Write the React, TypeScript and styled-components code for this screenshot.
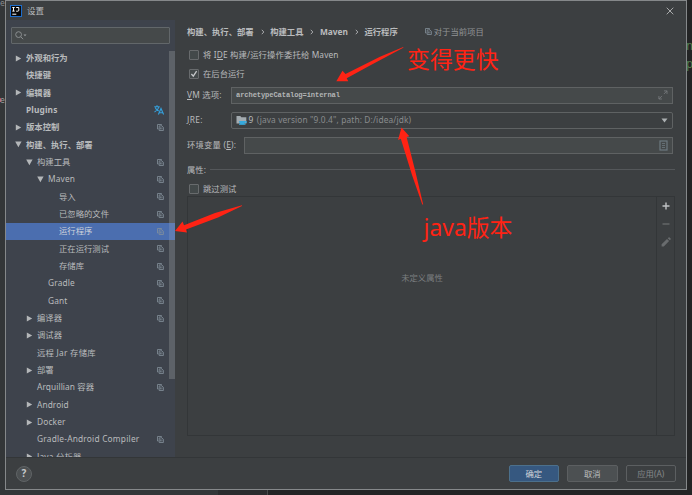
import React from 'react';
import styled, { createGlobalStyle, css } from 'styled-components';

const GlobalStyle = createGlobalStyle`
  * { box-sizing: border-box; }
  html, body { margin: 0; padding: 0; background: #2b2d2f; }
  body { overflow: hidden; }
`;

const Desktop = styled.div`
  position: relative;
  width: 692px;
  height: 495px;
  overflow: hidden;
  padding-left: 5px;
  background:
    linear-gradient(#333638, #333638) 0 0 / 5px 495px no-repeat,
    linear-gradient(90deg, #333638 0 218px, #2b2c2e 218px 267px, #484a4b 267px 268px, #232425 268px);
  font-family: 'Noto Sans', 'Noto Sans CJK SC', sans-serif;
  font-size: 8.33px;
  line-height: 12px;
  color: #b9bbbd;
  white-space: nowrap;
`;

const EditorGlyph = styled.span<{ $x: number; $y: number; $color: string; $size?: number }>`
  position: absolute;
  left: ${p => p.$x}px;
  top: ${p => p.$y}px;
  color: ${p => p.$color};
  font: ${p => p.$size ?? 9}px/12px 'DejaVu Sans Mono', monospace;
`;

const ErrorMark = styled.span`
  position: absolute;
  left: 0;
  top: 98px;
  width: 1px;
  height: 4px;
  background: #b8433d;
`;

const Dialog = styled.div`
  position: relative;
  display: flex;
  flex-direction: column;
  width: 682px;
  height: 490px;
  border: 1px solid #85888a;
  background: #3c3f41;
`;

const TitleBar = styled.header`
  display: flex;
  align-items: center;
  flex: 0 0 19px;
  padding: 0 12px 0 4px;
  gap: 5px;
  font-size: 8.5px;
  svg:last-child { margin-left: auto; }
`;

const Body = styled.div`
  display: flex;
  flex: 0 0 438px;
  min-height: 0;
  height: 438px;
  border-bottom: 1px solid #333638;
`;

const Sidebar = styled.aside`
  display: flex;
  flex-direction: column;
  width: 169px;
  height: 437px;
  overflow: hidden;
  background: #3e434c;
`;

const Search = styled.div`
  display: flex;
  align-items: center;
  flex: none;
  width: 159px;
  height: 17px;
  margin: 7px 5px 5.5px;
  padding-left: 3px;
  border: 1px solid #62676a;
  border-radius: 1px;
  background: #45494a;
`;

const TreeViewport = styled.div`
  flex: 1;
  min-height: 0;
  overflow: hidden;
  background: linear-gradient(#5d6268, #5d6268) 163px 1px / 6px 328px no-repeat;
`;

const Tree = styled.div`
  width: 169px;
`;

const TreeRow = styled.div<{ $depth: number; $bold?: boolean; $selected?: boolean }>`
  display: flex;
  align-items: center;
  height: 17.33px;
  padding: 0 11.5px 0 ${p => 9 + p.$depth * 11}px;
  font-weight: ${p => (p.$bold ? 700 : 400)};
  ${p => p.$selected && css`
    background: linear-gradient(90deg, #4b6eaf 163px, #5f7db4 163px);
    color: #d0d4dc;
  `}
`;

const ArrowSlot = styled.span`
  display: flex;
  flex: 0 0 11px;
`;

const RowLabel = styled.span<{ $spacing?: number }>`
  flex: 1;
  letter-spacing: ${p => p.$spacing ?? 0}px;
`;

const Main = styled.main`
  flex: 1;
  display: flex;
  flex-direction: column;
  padding: 4.5px 11px 0 12px;
`;

const Breadcrumb = styled.nav`
  display: flex;
  align-items: center;
  height: 14px;
  font-weight: 700;
`;

const Separator = styled.svg`
  margin: 0 5.5px 0 7px;
`;

const Scope = styled.span`
  display: flex;
  align-items: center;
  gap: 2px;
  margin-left: 27px;
  font-weight: 400;
  color: #929597;
`;

const CheckRow = styled.label<{ $top: number; $spacing?: number }>`
  display: flex;
  align-items: center;
  height: 12px;
  margin-top: ${p => p.$top}px;
  padding-left: 2px;
  gap: 4px;
  letter-spacing: ${p => p.$spacing ?? 0}px;
`;

const CheckBox = styled.span`
  display: flex;
  align-items: center;
  justify-content: center;
  width: 10px;
  height: 10px;
  border: 1px solid #686b6d;
  border-radius: 1px;
  background: #43494a;
`;

const FieldRow = styled.div<{ $top: number; $label: number; $spacing?: number }>`
  display: grid;
  grid-template-columns: ${p => p.$label}px 1fr;
  align-items: center;
  height: 17px;
  margin-top: ${p => p.$top}px;
  padding-right: 2px;
  letter-spacing: ${p => p.$spacing ?? 0}px;
`;

const FieldBox = styled.div<{ $combo?: boolean }>`
  display: flex;
  align-items: center;
  height: 17px;
  padding: 0 4px;
  border: 1px solid #5f6263;
  border-radius: ${p => (p.$combo ? 2 : 0)}px;
  background: ${p => (p.$combo ? '#3c3f41' : '#45494a')};
  svg:last-child { margin-left: auto; }
`;

const Mono = styled.span`
  font: 700 7.1px/12px 'Liberation Mono', monospace;
  letter-spacing: -0.1px;
  color: #b3b5b6;
`;

const Version = styled.span`
  margin: 0 3px 0 1.5px;
`;

const Muted = styled.span`
  color: #898c8e;
  letter-spacing: 0.13px;
`;

const SectionTitle = styled.div`
  display: flex;
  align-items: center;
  gap: 4px;
  height: 12px;
  margin-top: 10px;
  &::after { content: ''; flex: 1; height: 1px; background: #54575a; }
`;

const Table = styled.section`
  display: flex;
  height: 240px;
  margin-top: 1px;
  border: 1px solid #333638;
`;

const EmptyState = styled.div`
  flex: 1;
  padding-top: 75px;
  text-align: center;
  color: #7b7e80;
`;

const TableTools = styled.div`
  display: flex;
  flex-direction: column;
  align-items: center;
  gap: 8px;
  width: 18px;
  padding-top: 4px;
  border-left: 1px solid #333638;
`;

const Footer = styled.footer`
  display: flex;
  align-items: center;
  flex: 1;
  padding: 0 10px;
  gap: 8px;
`;

const Help = styled.button`
  width: 16px;
  height: 16px;
  margin-right: auto;
  padding: 0;
  border: 1px solid #606466;
  border-radius: 50%;
  background: #4c5052;
  color: #c5c8ca;
  font: 700 10px/13px 'Noto Sans', sans-serif;
`;

const Button = styled.button<{ $kind?: 'primary' | 'disabled' }>`
  width: 50.5px;
  height: 17px;
  padding: 0;
  border: 1px solid ${p => (p.$kind === 'primary' ? '#4c708c' : '#5c5f61')};
  border-radius: 2px;
  background: ${p => (p.$kind === 'primary' ? '#365880' : p.$kind === 'disabled' ? '#3c3f41' : '#4c5052')};
  color: ${p => (p.$kind === 'primary' ? '#d0d5da' : p.$kind === 'disabled' ? '#85888a' : '#bbbdbf')};
  font: inherit;
  line-height: 14px;
`;

const Annotations = styled.svg`
  position: absolute;
  inset: 0;
  pointer-events: none;
`;

const Note = styled.div<{ $x: number; $y: number }>`
  position: absolute;
  left: ${p => p.$x}px;
  top: ${p => p.$y}px;
  color: #ff2314;
  font-size: 22.9px;
  line-height: 30px;
`;

const CopyIcon = () => (
  <svg width="7" height="7" viewBox="0 0 7 7" fill="none" stroke="#84909a" strokeWidth=".8">
    <path d="M1.6 5H.5V.5h4v1M2.2 1.9h2.6l1.6 1.4v3.2H2.2zM3.4 3.4v2M4.9 3.4v2" />
  </svg>
);

const TranslateIcon = () => (
  <svg width="10" height="10" viewBox="0 0 10 10" fill="none" stroke="#35a0dc" strokeWidth="1.1">
    <path d="M.3 1.7h5.4M3 .3v1.4M1.2 2.5c.7 2 2 3 3.6 3.6M4.9 2.2C4.2 4.5 2.6 6 .5 7M4.4 9.5 7 3.5l2.6 6M5.3 7.7h3.4" />
  </svg>
);

const TreeArrow = ({ open }: { open?: boolean }) => (
  <svg width="7" height="7" viewBox="0 0 7 7" fill="#b4b7b9">
    <path d={open ? 'M.2.6h6.400L3.400 6.200z' : 'M.8.4v6.200l5.400-3.100z'} />
  </svg>
);

const Chevron = () => (
  <Separator width="4" height="6" viewBox="0 0 4 6" fill="none" stroke="#b4b7b9" strokeWidth=".9">
    <path d="m.8.8 2 2.2-2 2.2" />
  </Separator>
);

type Item = {
  label: string;
  depth: number;
  arrow?: 'open' | 'closed';
  icon?: 'copy' | 'translate';
  bold?: boolean;
  selected?: boolean;
  spacing?: number;
};

const items: Item[] = [
  { label: '外观和行为', depth: 0, arrow: 'closed', bold: true },
  { label: '快捷键', depth: 0, bold: true },
  { label: '编辑器', depth: 0, arrow: 'closed', bold: true },
  { label: 'Plugins', depth: 0, icon: 'translate', bold: true, spacing: 0.15 },
  { label: '版本控制', depth: 0, arrow: 'closed', icon: 'copy', bold: true },
  { label: '构建、执行、部署', depth: 0, arrow: 'open', bold: true },
  { label: '构建工具', depth: 1, arrow: 'open', icon: 'copy' },
  { label: 'Maven', depth: 2, arrow: 'open', icon: 'copy', spacing: 0.15 },
  { label: '导入', depth: 3, icon: 'copy' },
  { label: '已忽略的文件', depth: 3, icon: 'copy' },
  { label: '运行程序', depth: 3, icon: 'copy', selected: true },
  { label: '正在运行测试', depth: 3, icon: 'copy' },
  { label: '存储库', depth: 3, icon: 'copy' },
  { label: 'Gradle', depth: 2, icon: 'copy', spacing: 0.15 },
  { label: 'Gant', depth: 2, icon: 'copy', spacing: 0.1 },
  { label: '编译器', depth: 1, arrow: 'closed', icon: 'copy' },
  { label: '调试器', depth: 1, arrow: 'closed' },
  { label: '远程 Jar 存储库', depth: 1, icon: 'copy', spacing: 0.25 },
  { label: '部署', depth: 1, arrow: 'closed', icon: 'copy' },
  { label: 'Arquillian 容器', depth: 1, icon: 'copy', spacing: 0.08 },
  { label: 'Android', depth: 1, arrow: 'closed', spacing: 0.08 },
  { label: 'Docker', depth: 1, arrow: 'closed', spacing: 0.15 },
  { label: 'Gradle-Android Compiler', depth: 1, icon: 'copy', spacing: 0.21 },
  { label: 'Java 分析器', depth: 1, arrow: 'closed', spacing: 0.2 },
];

export default function App() {
  return (
    <>
      <GlobalStyle />
      <Desktop>
        <EditorGlyph $x={0} $y={-2} $color="#8b8d8f" $size={8}>e</EditorGlyph>
        <ErrorMark />
        <EditorGlyph $x={0} $y={95} $color="#a0a2a4" $size={8}>e</EditorGlyph>
        <EditorGlyph $x={686} $y={40} $color="#557f50" $size={12}>n</EditorGlyph>
        <EditorGlyph $x={686} $y={58} $color="#557f50" $size={12}>p</EditorGlyph>
        <Dialog>
          <TitleBar>
            <svg width="12" height="12" viewBox="0 0 12 12">
              <rect x=".5" y=".5" width="11" height="11" fill="#080808" stroke="#1d6dcc" />
              <path d="M2.3 2.5h2.4M3.5 2.5v3.6M2.3 6.1h2.4M6.2 2.5h2.6v2.7q0 1-1 1H6.2M2.3 9.2h4" stroke="#fff" fill="none" />
            </svg>
            <span>设置</span>
            <svg width="8" height="8" viewBox="0 0 8 8" stroke="#b4b7b8" strokeWidth=".9">
              <path d="m.7.7 6.6 6.6M7.3.7.7 7.3" />
            </svg>
          </TitleBar>
          <Body>
            <Sidebar>
              <Search>
                <svg width="12" height="9" viewBox="0 0 12 9" fill="none" stroke="#8b8f91">
                  <circle cx="3.6" cy="3.6" r="2.9" />
                  <path d="m5.7 5.7 2.4 2.5" />
                  <path d="M8.5 3.5h3L10 5.2z" fill="#9a9ea0" stroke="none" />
                </svg>
              </Search>
              <TreeViewport>
                <Tree>
                  {items.map(it => (
                    <TreeRow key={it.label} $depth={it.depth} $bold={it.bold} $selected={it.selected}>
                      <ArrowSlot>{it.arrow && <TreeArrow open={it.arrow === 'open'} />}</ArrowSlot>
                      <RowLabel $spacing={it.spacing}>{it.label}</RowLabel>
                      {it.icon === 'copy' && <CopyIcon />}
                      {it.icon === 'translate' && <TranslateIcon />}
                    </TreeRow>
                  ))}
                </Tree>
              </TreeViewport>
            </Sidebar>
            <Main>
              <Breadcrumb>
                <span>构建、执行、部署</span><Chevron />
                <span>构建工具</span><Chevron />
                <span>Maven</span><Chevron />
                <span>运行程序</span>
                <Scope><CopyIcon />对于当前项目</Scope>
              </Breadcrumb>
              <CheckRow $top={10.5} $spacing={0.13}>
                <CheckBox />
                <span>将 I<u>D</u>E 构建/运行操作委托给 Maven</span>
              </CheckRow>
              <CheckRow $top={7}>
                <CheckBox>
                  <svg width="8" height="8" viewBox="0 0 8 8" fill="none" stroke="#c5c8ca" strokeWidth="1.3">
                    <path d="m1.4 4 1.9 2.2 3.3-5" />
                  </svg>
                </CheckBox>
                <span>在后台运行</span>
              </CheckRow>
              <FieldRow $top={6.5} $label={44} $spacing={0.15}>
                <span><u>V</u>M 选项:</span>
                <FieldBox>
                  <Mono>archetypeCatalog=internal</Mono>
                  <svg width="10" height="10" viewBox="0 0 10 10" fill="none" stroke="#74787a" strokeWidth=".9">
                    <path d="M6 .9h3v3M9 .9 5.9 4M.9 6v3h3M.9 9 4 5.9" />
                  </svg>
                </FieldBox>
              </FieldRow>
              <FieldRow $top={8} $label={44} $spacing={0.4}>
                <span><u>J</u>RE:</span>
                <FieldBox $combo>
                  <svg width="11" height="10" viewBox="0 0 11 10">
                    <path d="M.5 1h3.8l1 1.3h5v6.200H.5z" fill="#a3abb0" />
                    <path d="M3.200 6h6v1q0 1.500-1.400 2.200H4.600Q3.200 8.500 3.200 7z" fill="#35a9dd" />
                    <path d="M9 6.500h1.500v1.300H9M3 9.500h6.500" stroke="#35a9dd" strokeWidth=".8" fill="none" />
                  </svg>
                  <Version>9</Version>
                  <Muted>(java version "9.0.4", path: D:/idea/jdk)</Muted>
                  <svg width="7" height="5" viewBox="0 0 7 5" fill="#acb0b2"><path d="M.5.5h6l-3 4z" /></svg>
                </FieldBox>
              </FieldRow>
              <FieldRow $top={8} $label={57} $spacing={0.2}>
                <span>环境变量 (<u>E</u>):</span>
                <FieldBox>
                  <svg width="9" height="11" viewBox="0 0 9 11" fill="none" stroke="#6d7980">
                    <rect x="1" y="1" width="7" height="9" strokeWidth="1.2" />
                    <path d="M3 3.500h3M3 5.500h3M3 7.500h3" strokeWidth=".8" />
                  </svg>
                </FieldBox>
              </FieldRow>
              <SectionTitle>属性:</SectionTitle>
              <CheckRow $top={7.5}>
                <CheckBox />
                <span>跳过测试</span>
              </CheckRow>
              <Table>
                <EmptyState>未定义属性</EmptyState>
                <TableTools>
                  <svg width="10" height="10" viewBox="0 0 10 10" stroke="#bfc2c4" strokeWidth="1.4"><path d="M5 1.500v7M1.500 5h7" /></svg>
                  <svg width="10" height="10" viewBox="0 0 10 10" stroke="#66696b" strokeWidth="1.4"><path d="M1.500 5h7" /></svg>
                  <svg width="10" height="10" viewBox="0 0 10 10" fill="#696c6e"><path d="M.6 9.400V7.200L6 1.900 8.100 4 2.800 9.400zM6.700 1.200l.9-.8q.5-.4 1 0l1 1q.4.5 0 1l-.8.900z" /></svg>
                </TableTools>
              </Table>
            </Main>
          </Body>
          <Footer>
            <Help>?</Help>
            <Button $kind="primary">确定</Button>
            <Button>取消</Button>
            <Button $kind="disabled">应用(A)</Button>
          </Footer>
        </Dialog>
        <Annotations width="692" height="495" viewBox="0 0 692 495" fill="#ff2314">
          <path d="M336.300 81.300 342.500 70.700 345.500 74 380 56.800 403.300 47 403.300 47.700 370 65.500 346.700 78.200 348.300 81.300z" />
          <path d="M175 231 182.500 221.500 184 225.200 215 213 242 205.200 242 206 218 217.500 186 229.400 187 232.600z" />
          <path d="M401.500 127.500 409.300 136.300 406.600 137 415 170 423.200 204.500 422.300 204.500 412 175 400.800 138.700 398 140z" />
        </Annotations>
        <Note $x={407} $y={44.5}>变得更快</Note>
        <Note $x={423.5} $y={212.5}>java版本</Note>
      </Desktop>
    </>
  );
}
